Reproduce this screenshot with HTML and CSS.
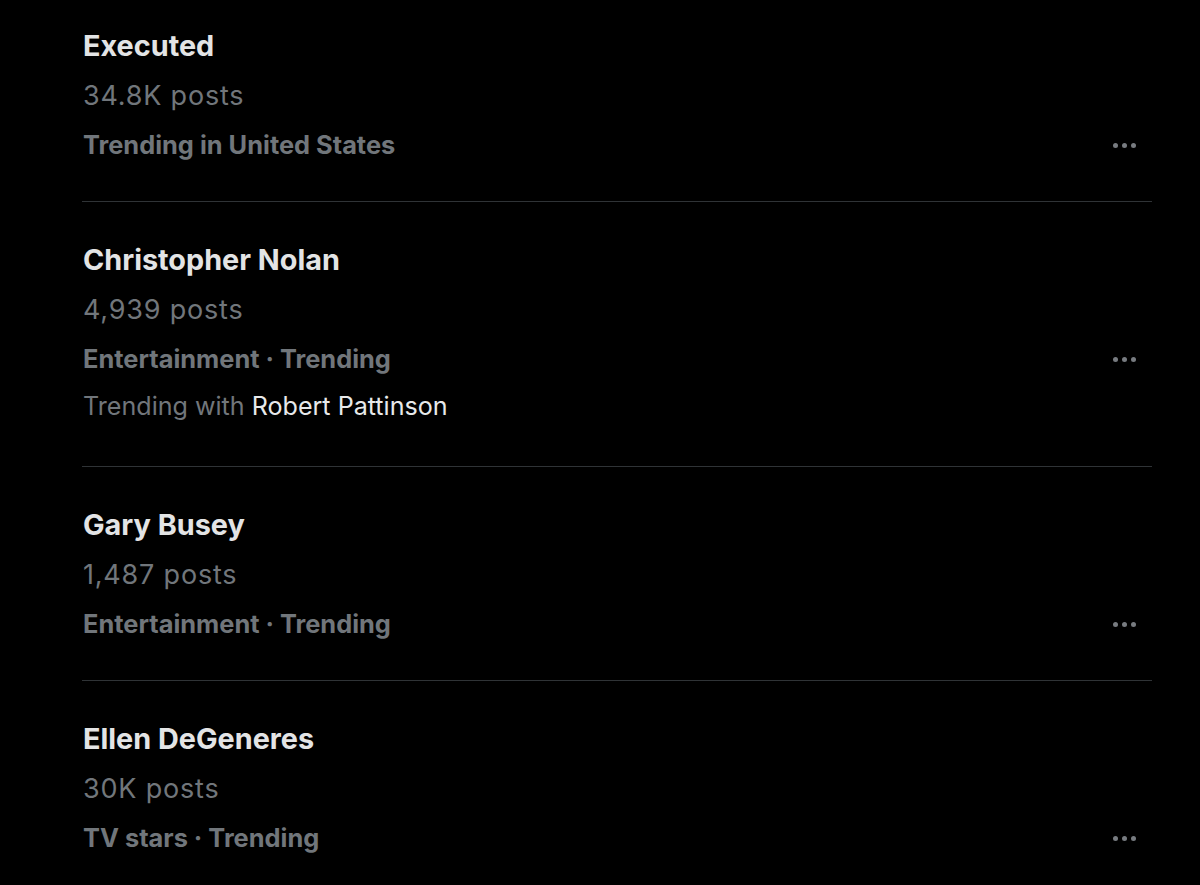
FILE: index.html
```html
<!DOCTYPE html>
<html lang="en">
<head>
<meta charset="utf-8">
<title>Trends</title>
<link rel="stylesheet" href="styles.css">
</head>
<body>
<div class="trends">
  <div class="trend">
    <div class="title">Executed</div>
    <div class="count">34.8K posts</div>
    <div class="meta">
      <span class="cat">Trending in United States</span>
      <span class="more"><i></i><i></i><i></i></span>
    </div>
  </div>
  <div class="trend">
    <div class="title">Christopher Nolan</div>
    <div class="count">4,939 posts</div>
    <div class="meta">
      <span class="cat">Entertainment · Trending</span>
      <span class="more"><i></i><i></i><i></i></span>
    </div>
    <div class="context">Trending with <span class="with">Robert Pattinson</span></div>
  </div>
  <div class="trend">
    <div class="title">Gary Busey</div>
    <div class="count">1,487 posts</div>
    <div class="meta">
      <span class="cat">Entertainment · Trending</span>
      <span class="more"><i></i><i></i><i></i></span>
    </div>
  </div>
  <div class="trend">
    <div class="title">Ellen DeGeneres</div>
    <div class="count">30K posts</div>
    <div class="meta">
      <span class="cat">TV stars · Trending</span>
      <span class="more"><i></i><i></i><i></i></span>
    </div>
  </div>
</div>
</body>
</html>
```
FILE: styles.css
```css
html, body {
  margin: 0;
  padding: 0;
  background: #000;
  height: 100%;
  overflow: hidden;
}
body {
  font-family: Inter, "Noto Sans", sans-serif;
  color: #e3e4e5;
}
.trends {
  margin: -12px 48px 0 82px;
}
.trend {
  padding: 33px 0 32px 1px;
  border-bottom: 1px solid #2f3336;
}
.title {
  height: 50px;
  line-height: 50px;
  font-size: 28.8px;
  font-weight: 700;
  color: #e3e4e5;
}
.count {
  height: 50px;
  line-height: 50px;
  font-size: 27px;
  letter-spacing: 0.8px;
  font-weight: 400;
  color: #71767b;
}
.meta {
  height: 48px;
  line-height: 48px;
  display: flex;
  justify-content: space-between;
  align-items: center;
}
.cat {
  font-size: 25.4px;
  font-weight: 700;
  color: #71767b;
}
.more {
  display: flex;
  gap: 4px;
  margin-right: 16px;
}
.more i {
  display: block;
  width: 5px;
  height: 5px;
  border-radius: 50%;
  background: #777b80;
}
.context {
  height: 46px;
  line-height: 46px;
  margin-bottom: 5px;
  font-size: 25.1px;
  color: #71767b;
}
.with {
  color: #e7e9ea;
}
```
